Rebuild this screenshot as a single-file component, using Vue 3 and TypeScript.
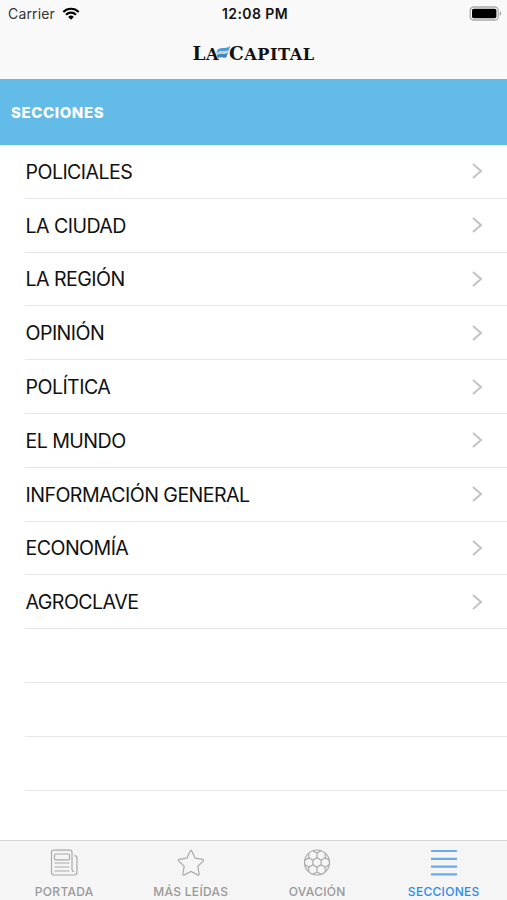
<script setup lang="ts">
import { ref } from 'vue'

type TabId = 'portada' | 'leidas' | 'ovacion' | 'secciones'

interface Tab {
  id: TabId
  label: string
}

const sections: string[] = [
  'POLICIALES',
  'LA CIUDAD',
  'LA REGIÓN',
  'OPINIÓN',
  'POLÍTICA',
  'EL MUNDO',
  'INFORMACIÓN GENERAL',
  'ECONOMÍA',
  'AGROCLAVE',
]
const emptyRows = 3

const tabs: Tab[] = [
  { id: 'portada', label: 'PORTADA' },
  { id: 'leidas', label: 'MÁS LEÍDAS' },
  { id: 'ovacion', label: 'OVACIÓN' },
  { id: 'secciones', label: 'SECCIONES' },
]
const active = ref<TabId>('secciones')
</script>

<template>
  <div class="screen">
    <header class="top">
      <div class="status">
        <div class="carrier">
          <span>Carrier</span>
          <svg class="wifi" viewBox="0 0 18 13" width="18" height="13">
            <path d="M1.3 4.9a11 11 0 0 1 15.4 0" />
            <path d="M4 7.7a7.1 7.1 0 0 1 10 0" />
            <path class="dot" d="M6.2 9.9a4 4 0 0 1 5.6 0L9 12.8z" />
          </svg>
        </div>
        <time class="clock">12:08 PM</time>
        <div class="battery-wrap">
          <svg viewBox="0 0 33 15" width="33" height="15">
            <rect x="1.2" y="1" width="28" height="13" rx="3.6" fill="#fff" stroke="#a9a9a9" stroke-width="1.3" />
            <rect x="3" y="2.8" width="24.4" height="9.4" rx="1.6" fill="#000" />
            <path d="M30.8 5.2c1.7.5 1.7 4.1 0 4.6z" fill="#999" />
          </svg>
        </div>
      </div>
      <h1 class="logo">
        <span>L<small>A</small></span>
        <svg class="flag" viewBox="0 0 15 13" width="15" height="13">
          <path d="M1 4.500C4 0 8 4 14.500 0L12.500 5C9 7 6 4 .5 8z" fill="#4d9bd4" />
          <path d="M.7 7C4 3 9 6.500 13 4L11.500 8.500C8 10 5 7 .8 10.500z" fill="#b9d8ec" />
          <path d="M.8 9.500C4 6 8 10 12 6.500L10.500 11C8 13.500 5 9.500 2 12.500z" fill="#3d85be" />
          <circle cx="6.300" cy="6.800" r="1" fill="#d5c66d" />
        </svg>
        <span>C<small>APITAL</small></span>
      </h1>
    </header>

    <h2 class="heading">SECCIONES</h2>

    <ul class="list">
      <li v-for="name in sections" :key="name" class="row">
        <span class="name">{{ name }}</span>
        <svg class="chevron" viewBox="0 0 12 18" width="12" height="18">
          <path d="M2 2l8 7-8 7" />
        </svg>
      </li>
      <li v-for="n in emptyRows" :key="n" class="row"></li>
    </ul>

    <nav class="tabs">
      <button
        v-for="tab in tabs"
        :key="tab.id"
        type="button"
        class="tab"
        :class="{ active: tab.id === active }"
        @click="active = tab.id"
      >
        <svg class="icon" viewBox="0 0 28 28" width="28" height="28">
          <template v-if="tab.id === 'portada'">
            <path d="M22 3.200Q22 1.200 20 1.200H3.500Q1.500 1.200 1.500 3.200V23.200Q1.500 26 4.500 26H24Q27 26 27 23V9Q27 6.600 24.500 6.600M22 3.200V20Q22 22.500 24.200 22.500" />
            <rect x="4.500" y="5" width="15" height="5.800" rx="1" />
            <path d="M4.500 14h15M4.500 18h15M4.500 22h15" />
          </template>
          <template v-else-if="tab.id === 'leidas'">
            <path d="M13.100 2.300q.9-1.700 1.800 0l3.300 6.900 7.400 1.100q1.800.4.600 1.800l-5.400 5.200 1.300 7.500q.2 1.900-1.500 1.100L14 22.400l-6.600 3.500q-1.700.8-1.500-1.100l1.300-7.500-5.400-5.200q-1.200-1.400.6-1.800l7.400-1.100z" />
          </template>
          <template v-else-if="tab.id === 'ovacion'">
            <circle cx="14" cy="13.500" r="12.500" />
            <path d="M14 8.800l4.100 2.400v4.600L14 18.200l-4.100-2.400v-4.600z" />
            <path d="M14 8.800V4.100M9.900 1.700L14 4.100l4.100-2.400M18.100 11.200l4.100-2.400M22.200 4.100v4.700l4 2.400M18.100 15.800l4.100 2.400M26.200 15.800l-4 2.400v4.700M14 18.200v4.700M9.900 25.300l4.100-2.400 4.100 2.400M9.900 15.800l-4.100 2.400M5.800 22.900v-4.700l-4-2.400M9.900 11.200L5.800 8.800M1.800 11.200l4-2.400V4.100" />
          </template>
          <path v-else class="bars" d="M1 2h26M1 9.800h26M1 17.600h26M1 25.400h26" />
        </svg>
        <span>{{ tab.label }}</span>
      </button>
    </nav>
  </div>
</template>

<style>
body {
  margin: 0;
}
</style>

<style scoped>
.screen {
  display: flex;
  flex-direction: column;
  width: 507px;
  height: 900px;
  overflow: hidden;
  background: #fff;
  color: #111;
  font-family: Inter, Roboto, sans-serif;
}
.top {
  box-sizing: border-box;
  flex: none;
  height: 79px;
  background: #f9f9f9;
}
.status {
  display: grid;
  grid-template-columns: 1fr auto 1fr;
  align-items: center;
  height: 27px;
  padding: 0 5px 0 8px;
  font-size: 14px;
}
.carrier {
  display: flex;
  align-items: center;
  gap: 7px;
  color: #333;
  letter-spacing: 0.15px;
}
.wifi path {
  fill: none;
  stroke: #000;
  stroke-width: 2.1;
}
.wifi .dot {
  fill: #000;
  stroke: none;
}
.clock {
  font-weight: 600;
  letter-spacing: 0.4px;
}
.battery-wrap {
  display: flex;
  justify-content: flex-end;
}
.logo {
  display: flex;
  align-items: center;
  justify-content: center;
  height: 53px;
  margin: 0;
  font: 700 18.5px/53px "DejaVu Serif", serif;
  letter-spacing: 0.5px;
}
.logo small {
  font-size: 16.2px;
}
.flag {
  margin: 0 -2px 2px -3px;
}
.heading {
  flex: none;
  height: 66px;
  margin: 0;
  padding-left: 11px;
  background: #63bbe8;
  color: #fff;
  font-size: 15px;
  font-weight: 800;
  line-height: 68px;
  letter-spacing: 0.6px;
}
.list {
  flex: 1;
  margin: 0;
  padding: 0;
  list-style: none;
}
.row {
  display: flex;
  box-sizing: border-box;
  align-items: center;
  justify-content: space-between;
  height: 53.8px;
  margin-left: 25px;
  padding: 0 24px 0 0.5px;
  border-bottom: 1px solid #e6e6e6;
  font-size: 19.6px;
  letter-spacing: -0.56px;
}
.name {
  padding-top: 1px;
}
.chevron {
  fill: none;
  stroke: #c2c2c5;
  stroke-width: 2;
}
.tabs {
  display: grid;
  box-sizing: border-box;
  flex: none;
  grid-template-columns: repeat(4, 1fr);
  height: 60px;
  padding-left: 1px;
  border-top: 1px solid #d4d4d4;
  background: #f5f5f5;
}
.tab {
  display: flex;
  flex-direction: column;
  align-items: center;
  gap: 7px;
  padding: 8px 0 0;
  border: 0;
  background: none;
  color: #999;
  font: 500 12px/16px Inter, sans-serif;
  letter-spacing: 0.3px;
}
.icon {
  fill: none;
  stroke: #aaa;
  stroke-width: 1.2;
}
.active {
  color: #2d8cf0;
}
.bars {
  stroke: #69aaf0;
  stroke-width: 2.2;
}
</style>
